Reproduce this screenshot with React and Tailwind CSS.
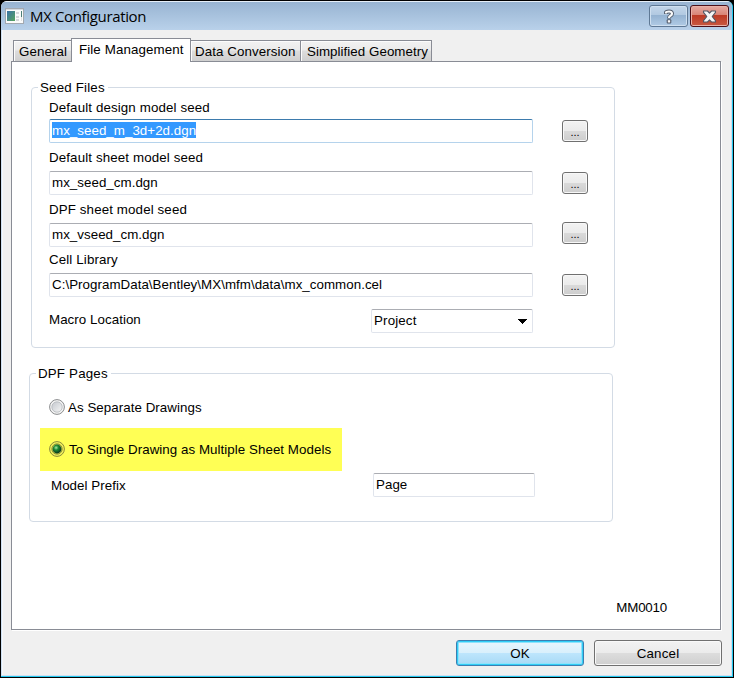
import React, { useState } from 'react';
import clsx from 'clsx';

const tabs = [
  { label: 'General', className: 'w-[59px] pl-[5px]', tracking: 'tracking-[0.1px]' },
  { label: 'File Management', className: 'w-[120px] pl-[7px] -mx-px', tracking: 'tracking-[0.1px]' },
  { label: 'Data Conversion', className: 'w-[111px] pl-[4px]', tracking: 'tracking-[0.08px]' },
  { label: 'Simplified Geometry', className: 'w-[132px] pl-[6px] -ml-px', tracking: 'tracking-[0.05px]' }
];

const seedFiles = [
  { label: 'Default design model seed', value: 'mx_seed_m_3d+2d.dgn', row: 'h-[50px]', gap: 'mt-[3px]', button: 'mt-px', selected: true },
  { label: 'Default sheet model seed', value: 'mx_seed_cm.dgn', row: 'h-[52px]', gap: 'mt-[5px]', button: 'mt-px' },
  { label: 'DPF sheet model seed', value: 'mx_vseed_cm.dgn', row: 'h-[50px]', gap: 'mt-[5px]', button: '-mt-px' },
  { label: 'Cell Library', value: 'C:\\ProgramData\\Bentley\\MX\\mfm\\data\\mx_common.cel', row: 'h-[52px]', gap: 'mt-[5px]', button: 'mt-px' }
];

const WindowIcon = () => (
  <svg width="19" height="16" viewBox="0 0 19 16" shapeRendering="crispEdges">
    <defs>
      <linearGradient id="screen" x1="0" y1="0" x2="1" y2="1">
        <stop offset="0" stopColor="#3b72a8" />
        <stop offset="1" stopColor="#57a55d" />
      </linearGradient>
    </defs>
    <rect x="0.5" y="0.5" width="18" height="15" fill="#fbfbfb" stroke="#a3a9b0" />
    <path d="M1 1.5h17" stroke="#d5dbe2" />
    <rect x="2" y="3" width="8" height="10" fill="url(#screen)" />
    <path d="M11 4h3v2h-3zM11 8h3v2h-3zM11 11h3v2h-3z" fill="#d6d8db" />
    <path d="M16.5 3v6" stroke="#4c7f78" />
    <path d="M16.5 9v4" stroke="#e0e0e0" />
  </svg>
);

const CaptionButton = ({ close }) => (
  <button
    aria-label={close ? 'Close' : 'Help'}
    className={clsx(
      'flex h-[22px] items-center justify-center rounded-[3px] border',
      close
        ? 'w-[39px] border-[#4b1019] bg-[linear-gradient(#e5aaa2_0%,#d98476_45%,#bd3a25_46%,#c85840_100%)] shadow-[inset_0_0_0_1px_#e9b0a6]'
        : 'w-[39px] border-[#5f7995] bg-[linear-gradient(#c3d6ea_0%,#b1c9e1_45%,#94b2d1_46%,#b0cbe5_100%)] shadow-[inset_0_0_0_1px_#cfe0f0]'
    )}
  >
    {close ? (
      <svg width="15" height="13" viewBox="0 0 15 13">
        <path
          d="M1.5 1h4l2 2.1L9.500 1h4v1.300L10.200 6.500l3.300 4.200V12h-4l-2-2.100L5.500 12h-4v-1.300L4.800 6.500 1.500 2.300z"
          fill="#f6f6f6"
          stroke="#535865"
          strokeWidth="1.1"
          strokeLinejoin="round"
        />
      </svg>
    ) : (
      <svg width="12" height="15" viewBox="0 0 12 15">
        <path d="M3 5V3.500Q3.200 2.500 6 2.500T9 4.500Q9 6 7.500 6.700T6 9.500" fill="none" stroke="#515b6b" strokeWidth="4" />
        <rect x="3.700" y="10.200" width="4.600" height="4.300" rx="1" fill="#515b6b" />
        <path d="M3 4.500V3.500Q3.200 2.500 6 2.500T9 4.500Q9 6 7.500 6.700T6 9" fill="none" stroke="#fafafa" strokeWidth="2.2" />
        <rect x="4.800" y="11.200" width="2.400" height="2.300" fill="#fafafa" />
      </svg>
    )}
  </button>
);

const GroupBox = ({ title, className, children }) => (
  <section className={clsx('rounded-[4px] border border-[#d3dbe5]', className)}>
    <h2 className="-mt-[9px] ml-[6px] h-4 w-fit bg-white pr-[3px] pl-[2px] leading-[18px] tracking-[0.18px]">{title}</h2>
    {children}
  </section>
);

const TextField = ({ value, selected, className }) => (
  <div
    className={clsx(
      'flex h-6 shrink-0 items-start rounded-[2px] border bg-white pt-[2px] pl-[2px]',
      selected ? 'border-[#b5d3ec] border-t-[#3d7bad]' : 'border-[#e0e4ec] border-t-[#abadb3]',
      className
    )}
  >
    <span
      className={clsx(
        'h-4 leading-[18px] tracking-[0.04px] whitespace-pre',
        selected && 'bg-[#3399ff] text-white'
      )}
    >
      {value}
    </span>
  </div>
);

const BrowseButton = ({ className }) => (
  <button
    className={clsx(
      'flex h-[22px] w-[26px] items-end justify-center rounded-[3px] border border-[#707070] bg-[linear-gradient(#f3f3f3_0%,#ebebeb_48%,#dadada_49%,#cdcdcd_100%)] pb-[4px] shadow-[inset_0_0_0_1px_#f8f8f8]',
      className
    )}
  >
    <span className="text-[11px] leading-[9px] tracking-normal">...</span>
  </button>
);

const Radio = ({ label, checked, onClick, className }) => (
  <button onClick={onClick} className={clsx('flex items-center text-left', className)}>
    <svg width="16" height="16" viewBox="0 0 16 16">
      <defs>
        <radialGradient id="dot" cx="0.4" cy="0.35" r="0.65">
          <stop offset="0" stopColor="#a9eba4" />
          <stop offset="0.4" stopColor="#1e8a35" />
          <stop offset="1" stopColor="#06351a" />
        </radialGradient>
        <linearGradient id="well" x1="0" y1="0" x2="1" y2="1">
          <stop offset="0" stopColor="#c4c8ce" />
          <stop offset="1" stopColor="#f6f6f6" />
        </linearGradient>
      </defs>
      <circle cx="8" cy="8" r="7.400" fill={checked ? '#f4f35a' : '#f4f4f4'} stroke={checked ? '#8a8a3a' : '#8a8c8e'} />
      {checked ? (
        <>
          <circle cx="8" cy="8" r="5.200" fill="#c9cc4a" stroke="#7d8338" strokeWidth="0.800" />
          <circle cx="8" cy="8" r="4.400" fill="url(#dot)" />
        </>
      ) : (
        <circle cx="8" cy="8" r="5.200" fill="url(#well)" stroke="#b2b6bb" strokeWidth="0.800" />
      )}
    </svg>
    <span className="h-4 leading-[18px]">{label}</span>
  </button>
);

const App = () => {
  const [activeTab, setActiveTab] = useState('File Management');
  const [pageMode, setPageMode] = useState('single');

  return (
    <div className="h-[678px] w-[734px] bg-black p-px font-['Liberation_Sans',Arial,sans-serif] text-[13.33px] tracking-[0.05px] text-black">
      <div className="flex h-[676px] w-[732px] flex-col overflow-hidden rounded-t-[6px] border-r border-b border-[#22c8ee] bg-[#f0f0f0]">
        {/* Title bar */}
        <header className="flex h-[29px] shrink-0 items-start border-t border-[#e6eff8] bg-linear-to-b from-[#98b4d2] to-[#b9d1ea] pr-[3px] pl-1">
          <div className="mt-[6px]">
            <WindowIcon />
          </div>
          <h1 className="mt-[4px] ml-[6px] font-['Open_Sans',sans-serif] text-[15px] leading-[20px] tracking-[-0.35px]">MX Configuration</h1>
          <div className="mt-[3px] ml-auto flex gap-[2px]">
            <CaptionButton />
            <CaptionButton close />
          </div>
        </header>

        <main className="flex flex-1 flex-col border-r border-b border-l border-[#cfe0f2] pr-[8px] pl-[9px] shadow-[inset_1px_0_0_#f4f8fc]">
          {/* Tabs */}
          <nav className="mt-2 ml-[2px] flex h-[23px] items-end">
            {tabs.map((tab) => {
              const active = tab.label === activeTab;
              return (
                <button
                  key={tab.label}
                  onClick={() => setActiveTab(tab.label)}
                  className={clsx(
                    'border border-b-0 border-[#898c95] text-left leading-4 whitespace-nowrap',
                    active
                      ? 'relative z-10 -mb-px h-6 bg-white pb-[2px]'
                      : 'h-[21px] bg-[linear-gradient(#f2f2f2_0%,#ebebeb_45%,#dddddd_50%,#cfcfcf_100%)] pt-px shadow-[inset_1px_1px_0_#fcfcfc]',
                    tab.className,
                    tab.tracking
                  )}
                >
                  {tab.label}
                </button>
              );
            })}
          </nav>

          <div className="flex h-[569px] w-[710px] shrink-0 flex-col border border-[#898c95] bg-white shadow-[1px_1px_0_#ffffff]">
            <GroupBox title="Seed Files" className="mt-[25px] ml-[19px] h-[261px] w-[584px]">
              <div className="mt-[5px] pl-[17px]">
                {seedFiles.map((file) => (
                  <div key={file.label} className={file.row}>
                    <div className="h-4 leading-4 tracking-[0.12px]">{file.label}</div>
                    <div className={clsx('flex items-start gap-[29px]', file.gap)}>
                      <TextField value={file.value} selected={file.selected} className="w-[484px]" />
                      <BrowseButton className={file.button} />
                    </div>
                  </div>
                ))}
                <div className="mt-[5px] flex w-[484px] justify-between">
                  <span className="mt-[3px] leading-4">Macro Location</span>
                  <div className="flex h-6 w-[162px] items-start justify-between rounded-[2px] border border-[#e0e4ec] border-t-[#abadb3] pt-[3px] pr-[5px] pl-[2px]">
                    <span className="leading-4 tracking-[0.15px]">Project</span>
                    <svg className="mt-[6px]" width="9" height="5" viewBox="0 0 9 5" shapeRendering="crispEdges">
                      <path d="M0 0h9v1H8v1H7v1H6v1H5v1H4V4H3V3H2V2H1V1H0z" />
                    </svg>
                  </div>
                </div>
              </div>
            </GroupBox>

            <GroupBox title="DPF Pages" className="mt-[25px] ml-[17px] h-[149px] w-[584px]">
              <Radio
                label="As Separate Drawings"
                checked={pageMode === 'separate'}
                onClick={() => setPageMode('separate')}
                className="mt-[18px] ml-[19px] h-4 gap-[3px]"
              />
              <Radio
                label="To Single Drawing as Multiple Sheet Models"
                checked={pageMode === 'single'}
                onClick={() => setPageMode('single')}
                className="mt-[13px] ml-[10px] h-[43px] w-[302px] gap-[4px] bg-[#ffff55] pb-px pl-[9px]"
              />
              <div className="mt-[2px] ml-[21px] flex w-[484px] justify-between">
                <span className="mt-[5px] leading-4">Model Prefix</span>
                <TextField value="Page" className="w-[162px]" />
              </div>
            </GroupBox>

            <div className="mt-auto mr-[53px] mb-[13px] self-end leading-4 tracking-[-0.2px]">MM0010</div>
          </div>

          {/* Dialog actions */}
          <footer className="mt-[10px] mr-px flex gap-[10px] self-end">
            <button className="h-[26px] w-[128px] rounded-[3px] border border-[#3c7fb1] bg-[linear-gradient(#eaf6fd_0%,#d9f0fc_48%,#bee6fd_49%,#a7d9f5_100%)] pt-px shadow-[inset_0_0_0_1px_#30cdf6,inset_0_0_0_2px_#8fe2fb]">
              OK
            </button>
            <button className="h-[26px] w-[128px] rounded-[3px] border border-[#707070] bg-[linear-gradient(#f2f2f2_0%,#ebebeb_48%,#dddddd_49%,#cfcfcf_100%)] pt-px tracking-[0.2px] shadow-[inset_0_0_0_1px_#f9f9f9]">
              Cancel
            </button>
          </footer>
        </main>
      </div>
    </div>
  );
};

export default App;
